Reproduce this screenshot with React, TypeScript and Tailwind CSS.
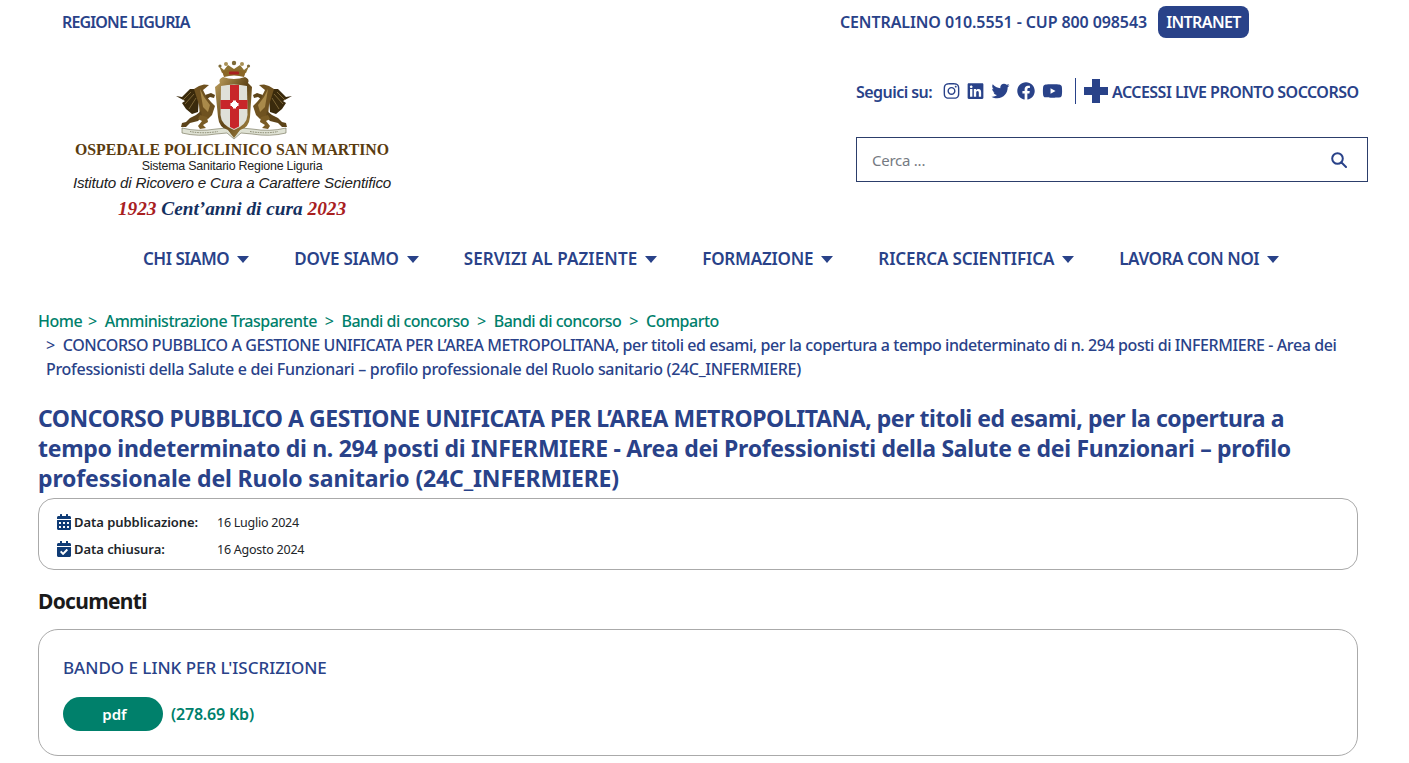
import { FaCalendarAlt, FaCalendarCheck, FaFacebook, FaInstagram, FaLinkedin, FaTwitter, FaYoutube } from 'react-icons/fa';

// tracking per item: the fallback font runs wider or narrower than the original on each word
const navItems = [
  { label: 'CHI SIAMO', track: 'tracking-[-0.5px]' },
  { label: 'DOVE SIAMO', track: 'tracking-[-0.2px]' },
  { label: 'SERVIZI AL PAZIENTE', track: 'tracking-[0.1px]' },
  { label: 'FORMAZIONE', track: 'tracking-[-0.2px]' },
  { label: 'RICERCA SCIENTIFICA', track: 'tracking-[-0.13px]' },
  { label: 'LAVORA CON NOI', track: 'tracking-[-0.4px]' },
];
const crumbs = ['Amministrazione Trasparente', 'Bandi di concorso', 'Bandi di concorso', 'Comparto'];

// griffin drawn for the left side, mirrored for the right
function Griffin({ flip }: { flip?: boolean }) {
  return (
    <g transform={flip ? 'translate(464 0) scale(-1 1)' : undefined}>
      {/* wing */}
      <path d="M174 97 L180 98 L188 90 L194 90 L197 100 L196 113 L190 115 L184 110 L180 104 L183 102 Z" fill="#3a2a0c" />
      <path d="M181 101 L189 93 M183 105 L192 95 M187 110 L194 99" stroke="#8b7440" strokeWidth="0.8" fill="none" />
      {/* neck and head */}
      <path d="M192 90 L197 87 L202 85.500 L207 86 L203.500 89 L201 91 L204 97 L209 103 L213 107 L210 116 L206 120 L198 118 L197 106 Z" fill="#6f5220" />
      <path d="M198 90 L202 98 L208 106 L206 113 L201 108 Z" fill="#a98a4a" />
      {/* front claw on the shield */}
      <path d="M203 96 L209 94 L213 96 L212 99 L208 98 L205 100 Z" fill="#5d441a" />
      {/* hind legs */}
      <path d="M199 112 L194 116 L188 119 L184 123 L180 124 L179 128 L184 128 L188 124 L196 122 L200 118 Z" fill="#5d441a" />
      <path d="M198 116 L205 118 L206 123 L201 126 L204 129 L198 130 L196 127 L200 122 L196 120 Z" fill="#7a5c26" />
    </g>
  );
}

function Crest() {
  return (
    <svg viewBox="160 55 140 90" className="w-[140px] h-[90px]">
      <defs>
        <linearGradient id="gold" x1="0" y1="0" x2="1" y2="1">
          <stop offset="0" stopColor="#c2a462" />
          <stop offset="0.5" stopColor="#5f4416" />
          <stop offset="1" stopColor="#b0904b" />
        </linearGradient>
      </defs>
      {/* ribbon */}
      <path d="M180 129 Q196 133 214 130 L225 129 L232 138 L239 129 L250 130 Q268 133 284 129 L284 134 Q268 138 250 135 L239 134 L232 140 L225 134 L214 135 Q196 138 180 134 Z" fill="#dfe2d4" stroke="#6d6c50" strokeWidth="0.6" />
      <path d="M188 132.500 Q200 135 216 132.500 M248 132.500 Q264 135 276 132.500" stroke="#6d6c50" strokeWidth="0.8" strokeDasharray="1.500 1" fill="none" />
      <Griffin />
      <Griffin flip />
      {/* crown */}
      <path d="M217 67 L222 71 L226 66 L232 70 L238 66 L242 71 L247 67 L244 74 Q232 71 220 74 Z" fill="#8e7333" />
      <circle cx="218" cy="67" r="1.600" fill="#7d6a37" />
      <circle cx="224" cy="65" r="2" fill="#a99156" />
      <circle cx="232" cy="64" r="2.200" fill="#7d6a37" />
      <circle cx="240" cy="65" r="2" fill="#a99156" />
      <circle cx="246.500" cy="67" r="1.600" fill="#7d6a37" />
      <path d="M220 72 Q232 69 244 72 L242 78 Q232 75 222 78 Z" fill="#8a6625" />
      <rect x="227" y="72.500" width="10" height="3" rx="1" fill="#a8201f" />
      {/* shield */}
      <path d="M218 84 Q216 80 221 78 Q232 82 243 78 Q248 80 246 84 L250 88 L248 118 Q247 129 238 131 L232 139 L226 131 Q217 129 216 118 L213 88 Z" fill="url(#gold)" />
      <path d="M219 87 Q232 84 245 87 L245.500 116 Q245 126 232 131 Q219 126 218.500 116 Z" fill="#dfe0d8" />
      <path d="M228 86 H237 V101 H245.500 V110 H237 V127.500 L232 130 L228 128 V110 H218.500 V101 H228 Z" fill="#c8262a" />
      <path d="M231 101.500 H234 V109.500 H231 Z M228.500 104 H236.500 V107 H228.500 Z" fill="#fff" />
      <path d="M230 103 H235 V108 H230 Z" fill="#fff" />
    </svg>
  );
}

export default function App() {
  return (
    <div className="h-[763px] overflow-hidden bg-white text-[#294289] font-['Noto_Sans',sans-serif]">
      {/* top bar */}
      <div className="flex items-center justify-between pt-[6px] pl-[62px] pr-[160px]">
        <a className="text-[16px] font-semibold tracking-[-0.85px]">REGIONE LIGURIA</a>
        <div className="flex items-center gap-[11px]">
          <span className="text-[16px] font-semibold tracking-[-0.1px]">CENTRALINO 010.5551 - CUP 800 098543</span>
          <span className="h-[32px] w-[91px] flex items-center justify-center rounded-lg bg-[#294289] text-white text-[16px] font-semibold tracking-[-0.6px]">INTRANET</span>
        </div>
      </div>

      {/* logo + social + search */}
      <div className="flex justify-between pl-[40px] pr-[41px]">
        <div className="w-[384px] flex flex-col items-center pt-[16px]">
          <Crest />
          <div className="-mt-[3px] h-[18px] leading-[18px] text-[#5a3c10] text-[15.8px] font-bold whitespace-nowrap font-['Liberation_Serif',serif]">OSPEDALE POLICLINICO SAN MARTINO</div>
          <div className="h-[14px] leading-[14px] text-[#222] text-[12.4px] whitespace-nowrap font-['Liberation_Sans',sans-serif] tracking-[-0.2px]">Sistema Sanitario Regione Liguria</div>
          <div className="h-[19px] leading-[19px] text-[#222] text-[15.2px] italic whitespace-nowrap font-['Liberation_Sans',sans-serif] tracking-[-0.2px]">Istituto di Ricovero e Cura a Carattere Scientifico</div>
          <div className="mt-[6px] h-[22px] leading-[22px] text-[19.3px] font-bold italic whitespace-nowrap text-[#14305f] font-['Liberation_Serif',serif]">
            <span className="text-[#a8201f]">1923</span> Cent’anni di cura <span className="text-[#a8201f]">2023</span>
          </div>
        </div>

        <div className="w-[512px] pt-[40px]">
          <div className="flex items-center h-[26px]">
            <span className="pt-[2px] text-[16px] font-semibold tracking-[-0.55px] w-[87px] whitespace-nowrap">Seguici su:</span>
            <div className="flex items-center gap-[7px] text-[18px]">
              <FaInstagram className="w-[17px] h-[18px]" />
              <FaLinkedin className="w-[17px] h-[18px]" />
              <FaTwitter className="w-[19px] h-[18px]" />
              <FaFacebook className="w-[18px] h-[18px]" />
              <FaYoutube className="w-[21px] h-[18px]" />
            </div>
            <div className="ml-[12px] h-[26px] border-l border-[#294289]" />
            <svg viewBox="0 0 24 24" className="ml-[8px] w-[24px] h-[24px]" fill="#294289">
              <path d="M8 0 H16 V8 H24 V16 H16 V24 H8 V16 H0 V8 H8 Z" />
            </svg>
            <span className="pt-[2px] ml-[4px] text-[16px] font-semibold tracking-[-0.53px] whitespace-nowrap">ACCESSI LIVE PRONTO SOCCORSO</span>
          </div>
          <div className="mt-[33px] h-[45px] border border-[#2c3e6b] flex items-center justify-between pl-[15px] pr-[20px]">
            <span className="pt-[2px] text-[15px] text-[#757a82] tracking-[-0.25px]">Cerca ...</span>
            <svg viewBox="0 0 16 16" className="w-[16px] h-[16px]" fill="none" stroke="#294289" strokeWidth="2" strokeLinecap="round">
              <circle cx="6.500" cy="6.500" r="5.300" />
              <path d="M10.500 10.500 L15 15" />
            </svg>
          </div>
        </div>
      </div>

      {/* main nav */}
      <nav className="flex pl-[143px] gap-[45px] mt-[24px] h-[30px] items-center">
        {navItems.map((item) => (
          <div key={item.label} className={`flex items-center gap-[8px] text-[17px] font-semibold whitespace-nowrap ${item.track}`}>
            {item.label}
            <span className="w-0 h-0 border-x-[6.500px] border-x-transparent border-t-[7px] border-t-[#294289]" />
          </div>
        ))}
      </nav>

      {/* breadcrumb */}
      <div className="mt-[35px] pl-[38px] text-[16px] leading-[24px]">
        <div className="flex items-center whitespace-nowrap text-[#00806b] font-medium tracking-[-0.5px]">
          <span className="w-[42px]">Home</span>
          {crumbs.map((c, i) => (
            <span key={i}>
              <span className="mx-[8px] font-normal">&gt;</span>
              {c}
            </span>
          ))}
        </div>
        <div className="pl-[8px] font-medium whitespace-nowrap">
          <span className="block tracking-[-0.41px]">
            <span className="font-normal mr-[8px]">&gt;</span>
            CONCORSO PUBBLICO A GESTIONE UNIFICATA PER L’AREA METROPOLITANA, per titoli ed esami, per la copertura a tempo indeterminato di n. 294 posti di INFERMIERE - Area dei
          </span>
          <span className="block tracking-[-0.3px]">Professionisti della Salute e dei Funzionari – profilo professionale del Ruolo sanitario (24C_INFERMIERE)</span>
        </div>
      </div>

      <div className="px-[38px] mr-[13px]">
        <h1 className="mt-[22px] text-[23px] leading-[30px] font-bold whitespace-nowrap">
          <span className="block tracking-[-0.45px]">CONCORSO PUBBLICO A GESTIONE UNIFICATA PER L’AREA METROPOLITANA, per titoli ed esami, per la copertura a</span>
          <span className="block tracking-[-0.29px]">tempo indeterminato di n. 294 posti di INFERMIERE - Area dei Professionisti della Salute e dei Funzionari – profilo</span>
          <span className="block tracking-[-0.14px]">professionale del Ruolo sanitario (24C_INFERMIERE)</span>
        </h1>

        {/* dates */}
        <div className="mt-[5px] h-[72px] rounded-[16px] border border-[#aaaaaa] pl-[18px] pt-[10px] text-[#212529]">
          <div className="flex items-center h-[27px]">
            <FaCalendarAlt className="-mt-[1px] w-[14px] h-[16px] text-[#0f3b75]" />
            <span className="pt-[1px] ml-[3px] w-[143px] text-[13px] font-semibold tracking-[-0.05px]">Data pubblicazione:</span>
            <span className="pt-[1px] text-[12.5px] tracking-[-0.25px]">16 Luglio 2024</span>
          </div>
          <div className="flex items-center h-[27px]">
            <FaCalendarCheck className="-mt-[1px] w-[14px] h-[16px] text-[#0f3b75]" />
            <span className="pt-[1px] ml-[3px] w-[143px] text-[13px] font-semibold tracking-[-0.05px]">Data chiusura:</span>
            <span className="pt-[1px] text-[12.5px] tracking-[-0.25px]">16 Agosto 2024</span>
          </div>
        </div>

        <h2 className="mt-[16px] h-[30px] leading-[30px] text-[21px] font-bold text-[#1a1a1a] tracking-[-0.7px]">Documenti</h2>

        {/* documents */}
        <div className="mt-[13px] h-[127px] rounded-[20px] border border-[#aaaaaa] pl-[24px] pt-[26px]">
          <div className="h-[24px] leading-[24px] text-[17px] font-medium tracking-[-0.02px]">BANDO E LINK PER L'ISCRIZIONE</div>
          <div className="mt-[17px] flex items-center gap-[8px]">
            <span className="pl-[3px] w-[100px] h-[34px] rounded-full bg-[#00806b] text-white text-[15px] font-semibold flex items-center justify-center">pdf</span>
            <span className="text-[16px] font-semibold text-[#00806b] tracking-[-0.2px]">(278.69 Kb)</span>
          </div>
        </div>
      </div>
    </div>
  );
}
